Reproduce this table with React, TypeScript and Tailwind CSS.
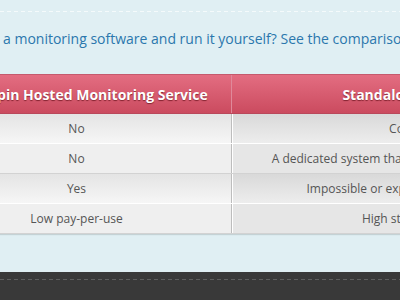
const rows = [
  { a: 'No', b: 'Complicated installation', shade: 'grad' },
  { a: 'No', b: 'A dedicated system that needs to be maintained around the clock.', shade: 'flat' },
  { a: 'Yes', b: 'Impossible or expensive to do from multiple locations', shade: 'grad' },
  { a: 'Low pay-per-use', b: 'High startup & maintenance costs', shade: 'flat' },
]

export default function App() {
  return (
    <div
      className="w-[400px] h-[300px] overflow-hidden bg-[#e0eff3] flex flex-col"
      style={{ fontFamily: '"Open Sans", sans-serif' }}
    >
      {/* top dashed rule */}
      <div className="mt-[11px] h-px bg-[repeating-linear-gradient(90deg,#f4fafb_0_4px,transparent_4px_7px)]" />

      {/* intro */}
      <p className="mt-[17px] pl-[3px] whitespace-nowrap text-[14px] leading-[20px] text-[#2b77ad]">
        a monitoring software and run it yourself? See the comparison below.
      </p>

      {/* comparison table */}
      <div className="mt-[25px] -ml-[78px] w-[900px] shadow-[0_1px_1px_rgba(0,0,0,0.12)]">
        <div className="flex h-[40px] border-t border-[#c45a6d] border-b border-b-[#b9485b] bg-[linear-gradient(#e36d81,#cb4b5f)] text-white font-bold text-[14px] [text-shadow:0_1px_1px_rgba(80,0,10,0.6)]">
          <div className="w-[310px] shrink-0 flex items-center justify-center border-r border-[#e0899a] whitespace-nowrap">
            Uptimepin Hosted Monitoring Service
          </div>
          <div className="w-[448px] shrink-0 flex items-center justify-center whitespace-nowrap">
            Standalone Monitoring Software
          </div>
        </div>
        {rows.map((r, i) => (
          <div
            key={i}
            className={
              'flex h-[30px] text-[12px] text-[#555] ' +
              (r.shade === 'grad' ? 'border-b border-white' : 'border-b border-[#d2d2d2]')
            }
          >
            <div
              className={
                'w-[310px] shrink-0 flex items-center justify-center border-r border-[#bdbdbd] whitespace-nowrap ' +
                (r.shade === 'grad' ? 'bg-[linear-gradient(#e4e4e4,#f6f6f6)]' : 'bg-[#efefef]')
              }
            >
              {r.a}
            </div>
            <div
              className={
                'w-[448px] shrink-0 flex items-center justify-center border-l border-white whitespace-nowrap ' +
                (r.shade === 'grad' ? 'bg-[linear-gradient(#d9d9d9,#ededed)]' : 'bg-[#e6e6e6]')
              }
            >
              {r.b}
            </div>
          </div>
        ))}
      </div>

      {/* footer */}
      <div className="mt-auto h-[28px] bg-[#393939] pt-[7px]">
        <div className="h-px bg-[repeating-linear-gradient(90deg,#5e5e5e_0_4px,transparent_4px_7px)]" />
      </div>
    </div>
  )
}
